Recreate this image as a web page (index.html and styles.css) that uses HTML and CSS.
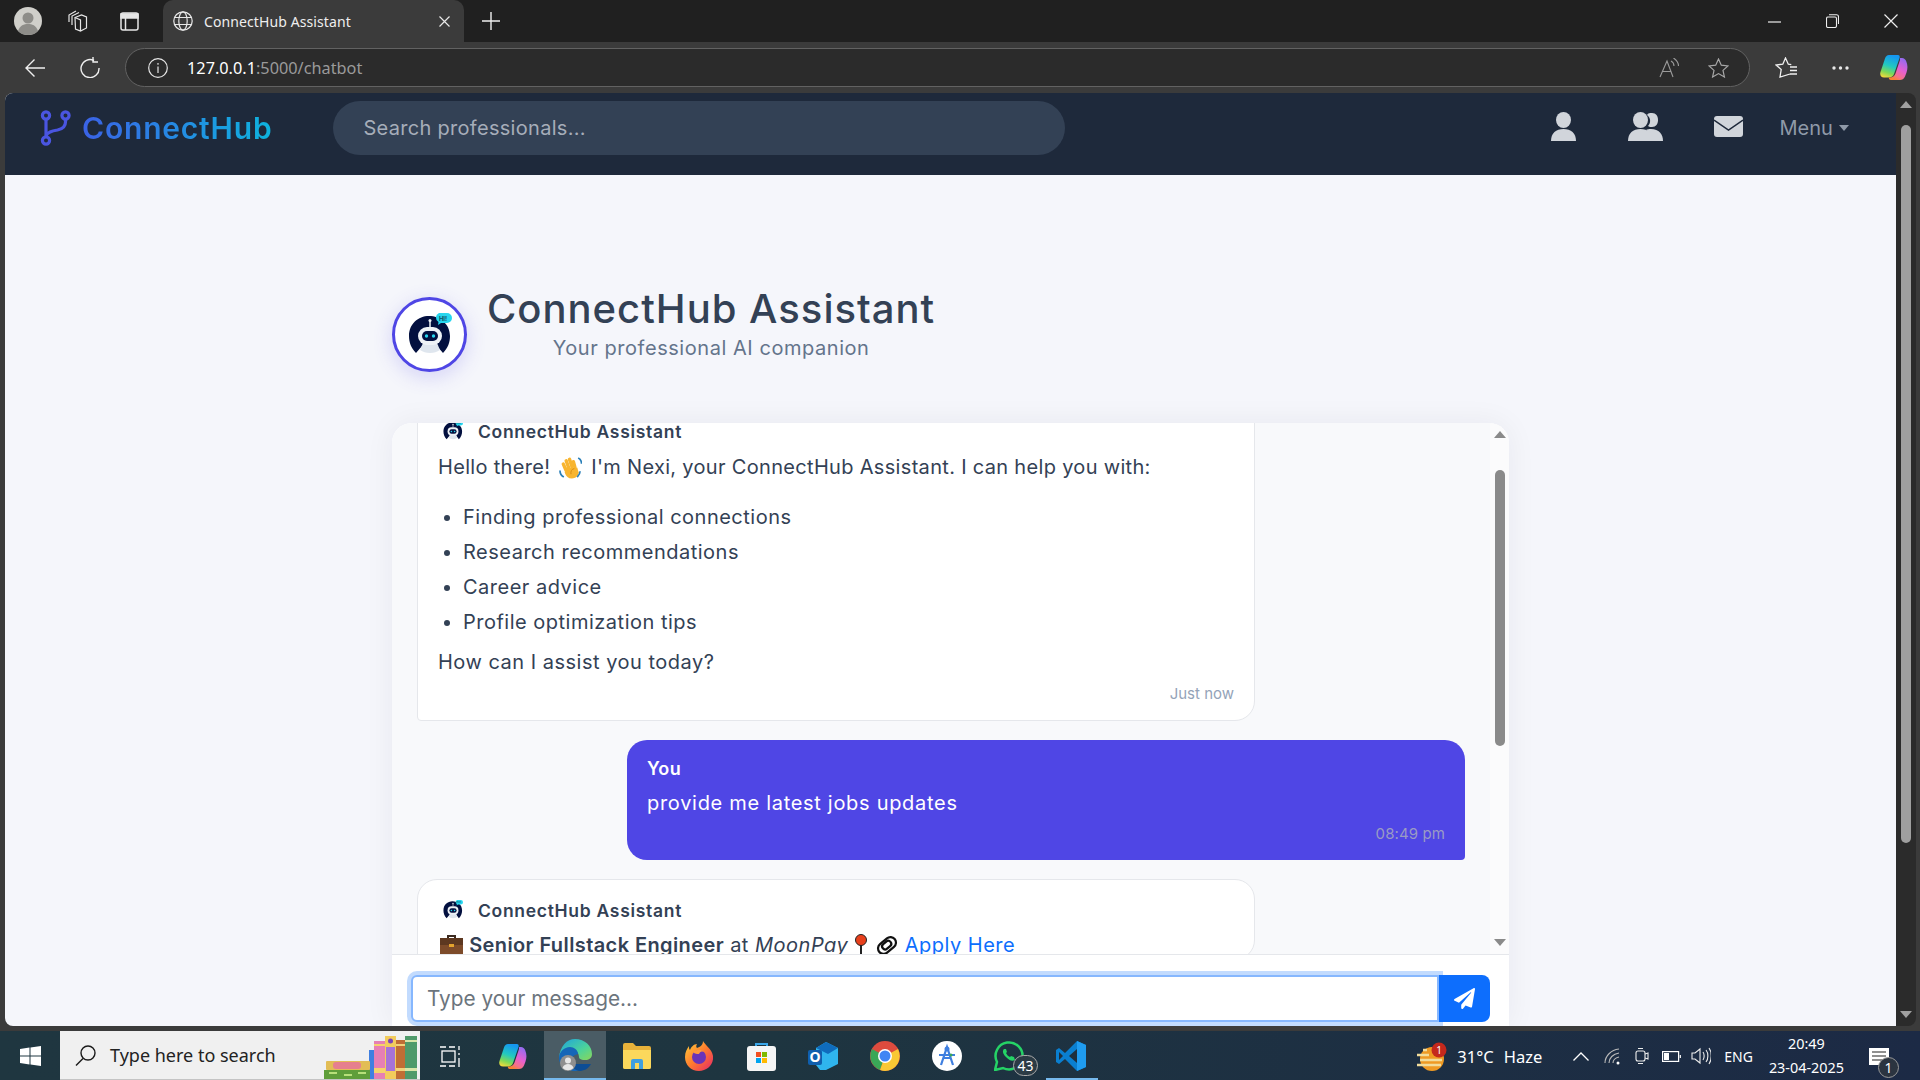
FILE: index.html
```html
<!DOCTYPE html>
<html lang="en">
<head>
    <meta charset="UTF-8">
    <meta name="viewport" content="width=device-width, initial-scale=1.0">
    <title>ConnectHub Assistant</title>
    <link rel="stylesheet" href="styles.css">
</head>
<body>
    <svg class="defs" width="0" height="0">
        <defs>
            <linearGradient id="cpa" x1="0.5" y1="0" x2="0.2" y2="1"><stop offset="0" stop-color="#1597f0"/><stop offset=".45" stop-color="#22c9c0"/><stop offset=".75" stop-color="#7ed957"/><stop offset="1" stop-color="#f6d93b"/></linearGradient>
            <linearGradient id="cpb" x1="0.8" y1="0" x2="0.3" y2="1"><stop offset="0" stop-color="#8d6cf2"/><stop offset=".5" stop-color="#e65fd0"/><stop offset=".8" stop-color="#f6708a"/><stop offset="1" stop-color="#f8822f"/></linearGradient>
            <symbol id="bot" viewBox="0 0 44 44">
                <path d="M8 40C3 35 1 29 1 23 1 11 10 3 21 3s21 8 21 20c0 6-2 12-7 17l-6-7H14z" fill="#03103f"/>
                <path d="M15 30h14l3 7c-3 2-6 3-10 3s-7-1-10-3z" fill="#dfe6ee"/>
                <rect x="10" y="14" width="24" height="18" rx="9" fill="#eef2f6"/>
                <rect x="14" y="18" width="16" height="10" rx="5" fill="#03103f"/>
                <circle cx="18.500" cy="23" r="1.700" fill="#27d6ee"/>
                <circle cx="25.500" cy="23" r="1.700" fill="#27d6ee"/>
                <path d="M22 8v6" stroke="#eef2f6" stroke-width="1.500"/>
                <circle cx="22" cy="7.500" r="1.500" fill="#eef2f6"/>
                <path d="M31 0h8a5 5 0 0 1 0 10h-6l-3 2 .5-3A5 5 0 0 1 31 0z" fill="#27d6ee"/>
                <text x="35" y="7.500" class="hi">HI!</text>
            </symbol>
            <symbol id="wave" viewBox="0 0 24 24">
                <g stroke="#f8b52f" stroke-width="3.600" stroke-linecap="round" fill="none">
                    <path d="M7 14 4.500 8.500"/>
                    <path d="M10 12 7.500 5"/>
                    <path d="M13.500 11 11 3.500"/>
                    <path d="M16.500 11.500 15 6"/>
                </g>
                <path d="M6 12h13l1.500 5c0 4-3.500 6.500-7 6.500-4 0-6-2-7.500-6z" fill="#f8b52f"/>
                <path d="M16 13c-3 1-4 3-3.500 6" stroke="#d68a12" stroke-width="1" fill="none"/>
                <path d="M1 15c0 3 1.500 5.500 4 7M20 2c2 1 3.500 3 3.500 6M22 16c0 2-1 4-3 6" stroke="#2a7fb8" stroke-width="1.800" fill="none"/>
            </symbol>
            <symbol id="copilot-mark" viewBox="0 0 28 27">
                <path d="M9 1h9c1.500 0 2 1.500 1.500 3L14 20c-.7 2-2.500 3.500-5 3.500H4C1 23.500-.5 21 .5 18L5 4.500C5.700 2.500 7 1 9 1z" fill="url(#cpa)"/>
                <path d="M20 4h2c2 0 3.500 1.500 4.300 3.500 1.500 4 1.500 7 .2 11l-1.500 4C24 25 22 26 20 26h-9c-1.500 0-2.500-1-2-2.500h1c2.500 0 4.500-1.500 5.500-4L20 6z" fill="url(#cpb)"/>
            </symbol>
        </defs>
    </svg>

    <div class="tab-strip">
        <span class="profile">
            <svg width="28" height="28" viewBox="0 0 28 28"><circle cx="14" cy="14" r="14" fill="#d0cfca"/><circle cx="14" cy="11" r="5.500" fill="#8e8d89"/><path d="M4 24c2-6 6-7 10-7s8 1 10 7c-3 3-6 4-10 4s-7-1-10-4z" fill="#8e8d89"/></svg>
        </span>
        <span class="strip-icon collections">
            <svg width="22" height="22" viewBox="0 0 22 22" fill="none" stroke="#e6e6e6" stroke-width="1.200"><path d="M9 7.500 15.500 5l5 2v11l-6 3-5-2z"/><path d="M9 7.500 14.500 10v11M6 15V6l7-3.500M3 12V5l7-4"/></svg>
        </span>
        <span class="strip-icon tabs-icon">
            <svg width="19" height="19" viewBox="0 0 19 19" fill="none" stroke="#e6e6e6" stroke-width="1.500"><rect x="1" y="1" width="17" height="17" rx="2"/><path d="M5.500 6v12" /><path d="M1 2h17v4H1z" fill="#e6e6e6"/></svg>
        </span>
        <div class="tab">
            <svg width="20" height="20" viewBox="0 0 20 20" fill="none" stroke="#e8e8e8" stroke-width="1.200"><circle cx="10" cy="10" r="9.200"/><ellipse cx="10" cy="10" rx="4.200" ry="9.200"/><path d="M1.500 6.500h17M1.500 13.500h17"/></svg>
            <span class="tab-title">ConnectHub Assistant</span>
            <svg class="tab-close" width="11" height="11" viewBox="0 0 11 11" stroke="#e8e8e8" stroke-width="1.200"><path d="M.5.500l10 10M10.500.500l-10 10"/></svg>
        </div>
        <svg class="new-tab" width="18" height="18" viewBox="0 0 18 18" stroke="#f0f0f0" stroke-width="1.400"><path d="M9 0v18M0 9h18"/></svg>
        <div class="window-controls">
            <svg width="13" height="13" viewBox="0 0 13 13" stroke="#eee" stroke-width="1.200"><path d="M0 7h13"/></svg>
            <svg width="13" height="14" viewBox="0 0 13 14" fill="none" stroke="#eee" stroke-width="1.100"><rect x=".5" y="3" width="10" height="10.500" rx="1.500"/><path d="M3 .7h7.500a2 2 0 0 1 2 2V10"/></svg>
            <svg width="14" height="14" viewBox="0 0 14 14" stroke="#eee" stroke-width="1.200"><path d="M.5.500l13 13M13.500.500l-13 13"/></svg>
        </div>
    </div>

    <div class="toolbar">
        <svg class="back" width="20" height="18" viewBox="0 0 20 18" fill="none" stroke="#efefef" stroke-width="1.400"><path d="M20 9H1M9.500.500 1 9l8.500 8.500"/></svg>
        <svg class="reload" width="20" height="21" viewBox="0 0 20 21" fill="none" stroke="#efefef" stroke-width="1.400"><path d="M14 3.500A9 9 0 1 0 19 11"/><path d="M13 0v5h5"/></svg>
        <div class="address">
            <svg width="20" height="20" viewBox="0 0 20 20" fill="none" stroke="#e6e6e6" stroke-width="1.200"><circle cx="10" cy="10" r="9.300"/><path d="M10 8.500V15M10 5v1.800"/></svg>
            <span class="url"><b>127.0.0.1</b>:5000/chatbot</span>
            <svg class="read-aloud" width="21" height="20" viewBox="0 0 21 20" fill="none" stroke="#9a9a9a" stroke-width="1.100"><path d="M1 19 8 3l6 16M3.500 13.500h9"/><path d="M12 3c2 1 3 3 3 5M14.500 0c3 2 5 5 5 8"/></svg>
            <svg class="address-star" width="21" height="20" viewBox="0 0 21 20" fill="none" stroke="#a8a8a8" stroke-width="1.200"><path d="m10.500 1 2.800 6.200 6.700.700-5 4.500 1.400 6.600-5.900-3.400L4.600 19l1.400-6.600-5-4.500 6.700-.700z"/></svg>
        </div>
        <svg class="fav-star" width="22" height="21" viewBox="0 0 22 21" fill="none" stroke="#f0f0f0" stroke-width="1.300"><path d="M15 17 5 20l1.200-7.500L1 8l6.800-.8L10.500 1l2.800 6.200 3 .5M15 10h7M15 13.500h7M15 17h7"/></svg>
        <svg class="more" width="17" height="4" viewBox="0 0 17 4" fill="#e8e8e8"><circle cx="2" cy="2" r="1.700"/><circle cx="8.500" cy="2" r="1.700"/><circle cx="15" cy="2" r="1.700"/></svg>
        <svg class="copilot" width="28" height="27"><use href="#copilot-mark"/></svg>
    </div>

    <div class="window">
        <div class="page">
            <nav class="navbar">
                <svg class="logo-mark" width="31" height="36" viewBox="0 0 31 36" fill="none" stroke="#4a55e0" stroke-width="3.200"><circle cx="6" cy="5.500" r="3.600"/><circle cx="6" cy="30.500" r="3.600"/><circle cx="25.500" cy="5.500" r="3.600"/><path d="M6 9v18M25.500 9v3c0 5-3 7-8 8-6 1-10 2-11.500 6"/></svg>
                <span class="brand">ConnectHub</span>
                <div class="search">Search professionals...</div>
                <div class="nav-links">
                    <svg class="nav-person" width="25" height="29" viewBox="0 0 25 29" fill="#d1d5db"><ellipse cx="12.500" cy="8" rx="7.500" ry="8"/><path d="M0 29c0-8 5-12 12.500-12S25 21 25 29z"/></svg>
                    <svg class="nav-people" width="35" height="29" viewBox="0 0 35 29" fill="#d1d5db"><path d="M19 3c1-2 3-2 5-2 4 0 6 3 6 7s-2 7-6 7c-1 0-3 0-4-1 3-3 3-8-1-11z"/><path d="M23 29c0-5-2-9-5-11 1-1 3-1 5-1 8 0 12 5 12 12z"/><ellipse cx="12.500" cy="8" rx="7.500" ry="8"/><path d="M0 29c0-8 5-12 12.500-12S25 21 25 29z"/></svg>
                    <svg class="nav-mail" width="29" height="21" viewBox="0 0 29 21"><rect width="29" height="21" rx="3" fill="#d1d5db"/><path d="M0 4 14.500 14 29 4" fill="none" stroke="#1e293b" stroke-width="1.500"/></svg>
                    <span class="nav-menu">Menu</span>
                    <span class="caret"></span>
                </div>
            </nav>

            <main class="main">
                <header class="chat-header">
                    <div class="header-avatar"><svg width="44" height="44"><use href="#bot"/></svg></div>
                    <div class="header-text">
                        <h1>ConnectHub Assistant</h1>
                        <p>Your professional AI companion</p>
                    </div>
                </header>

                <section class="chat-box">
                    <div class="messages-row">
                        <div class="messages">
                            <div class="msg bot first">
                                <div class="sender"><svg width="20" height="20"><use href="#bot"/></svg><span>ConnectHub Assistant</span></div>
                                <p class="hello">Hello there! <svg class="emoji" width="23" height="23"><use href="#wave"/></svg> I'm Nexi, your ConnectHub Assistant. I can help you with:</p>
                                <ul>
                                    <li>Finding professional connections</li>
                                    <li>Research recommendations</li>
                                    <li>Career advice</li>
                                    <li>Profile optimization tips</li>
                                </ul>
                                <p class="ask">How can I assist you today?</p>
                                <div class="time">Just now</div>
                            </div>
                            <div class="msg user">
                                <div class="you">You</div>
                                <p>provide me latest jobs updates</p>
                                <div class="time">08:49 pm</div>
                            </div>
                            <div class="msg bot">
                                <div class="sender"><svg width="20" height="20"><use href="#bot"/></svg><span>ConnectHub Assistant</span></div>
                                <p class="job">
                                    <svg class="emoji" width="23" height="23" viewBox="0 0 23 23"><path d="M8 5V2h7v3" fill="none" stroke="#3b2a20" stroke-width="2"/><rect y="4" width="23" height="18" rx="2" fill="#7d4b2a"/><rect y="4" width="23" height="7" fill="#5d3820"/><rect x="9" y="10" width="5" height="3" fill="#e3a32e"/></svg>
                                    <strong>Senior Fullstack Engineer</strong> at <em>MoonPay</em>
                                    <svg class="emoji pin" width="14" height="23" viewBox="0 0 14 23"><circle cx="7" cy="6" r="5.500" fill="#e8401c" stroke="#222"/><path d="M7 11v12" stroke="#222" stroke-width="2"/></svg>
                                    <svg class="emoji" width="24" height="23" viewBox="0 0 24 23" fill="none" stroke="#111" stroke-width="2.200"><rect x="2" y="6" width="20" height="11" rx="5.500" transform="rotate(-40 12 11.500)"/><rect x="7" y="8" width="10" height="6" rx="3" transform="rotate(-40 12 11.500)"/></svg>
                                    <a href="#">Apply Here</a>
                                </p>
                            </div>
                        </div>
                        <div class="inner-scrollbar">
                            <span class="arrow-up dim"></span>
                            <span class="inner-thumb"></span>
                            <span class="arrow-down dim"></span>
                        </div>
                    </div>
                    <form class="composer">
                        <div class="composer-input">Type your message...</div>
                        <button type="button" class="send">
                            <svg width="21" height="21" viewBox="0 0 512 512" fill="#fff"><path d="M476 3.200 12.500 270.600c-18.100 10.400-15.800 35.600 2.200 43.200L121 358.400l287.300-253.200c5.500-4.900 13.300 2.600 8.600 8.300L176 407v80.500c0 23.600 28.500 32.900 42.500 15.800L282 426l124.600 52.200c14.200 6 30.400-2.900 33-18.200l72-432C515 7.800 493.300-6.800 476 3.200z"/></svg>
                        </button>
                    </form>
                </section>
            </main>
        </div>
        <div class="page-scrollbar">
            <span class="arrow-up"></span>
            <span class="page-thumb"></span>
            <span class="arrow-down"></span>
        </div>
    </div>

    <footer class="taskbar">
        <span class="start">
            <svg width="21" height="20" viewBox="0 0 21 20" fill="#fff"><path d="M0 3 9.500 1.600V9.500H0zM10.500 1.400 21 0v9.500H10.500zM0 10.500h9.500v7.900L0 17zM10.500 10.500H21V20l-10.500-1.500z"/></svg>
        </span>
        <div class="task-search">
            <svg width="21" height="21" viewBox="0 0 21 21" fill="none" stroke="#1a1a1a" stroke-width="1.400"><circle cx="13" cy="8" r="7"/><path d="M8 13.500 1 20.500"/></svg>
            <span>Type here to search</span>
            <svg class="books" width="96" height="44" viewBox="0 0 96 44">
                <rect x="45" y="15" width="5" height="29" fill="#3f7fe0"/>
                <rect x="50" y="6" width="11" height="38" fill="#e67fb4"/><rect x="50" y="9" width="11" height="2" fill="#f5d26b"/><rect x="50" y="33" width="11" height="5" fill="#f5d26b"/>
                <rect x="61" y="1" width="11" height="43" fill="#f2cc5c"/><rect x="62" y="12" width="9" height="24" fill="#a673d8"/><circle cx="66.500" cy="6" r="2.500" fill="#7a45b8"/>
                <rect x="72" y="5" width="9" height="39" fill="#c06e35"/><rect x="72" y="9" width="9" height="2" fill="#f2d27a"/><rect x="72" y="33" width="9" height="3" fill="#f2d27a"/>
                <rect x="81" y="1" width="12" height="43" fill="#4f9a6a"/><rect x="81" y="5" width="12" height="2" fill="#d8e6a8"/><rect x="81" y="33" width="12" height="3" fill="#d8e6a8"/>
                <rect x="2" y="26" width="44" height="9" rx="1" fill="#e2bd55"/><rect x="9" y="27" width="28" height="7" rx="3" fill="#e67f8e"/>
                <rect y="35" width="46" height="9" fill="#5f9e3a"/><path d="M5 38h8M20 40h8M34 38h8" stroke="#b8e07a" stroke-width="2"/>
            </svg>
        </div>
        <span class="slot task-view">
            <svg width="21" height="21" viewBox="0 0 21 21" fill="none" stroke="#fff" stroke-width="1.300"><rect x="2" y="5" width="13" height="11"/><path d="M0 1h6M9 1h6M0 20h6M9 20h6M19 0v4M19 7v2M19 12v9"/></svg>
        </span>
        <span class="slot">
            <svg width="28" height="27"><use href="#copilot-mark"/></svg>
        </span>
        <span class="slot active">
            <svg width="33" height="32" viewBox="0 0 33 32">
                <defs><linearGradient id="edge" x1="0" y1="0" x2="1" y2="1"><stop offset="0" stop-color="#1ca2e0"/><stop offset=".6" stop-color="#4cd39a"/><stop offset="1" stop-color="#8ad65a"/></linearGradient></defs>
                <path d="M16 0c10 0 17 7 17 15 0 4-3 6-7 6-5 0-6-2-6-3 0-5-5-9-10-7-4 1-8 4-10 8C1 7 8 0 16 0z" fill="url(#edge)"/>
                <path d="M0 19c0-6 5-11 11-11 4 0 8 3 8 7-5 1-8 5-7 10 1 3 4 6 8 7C9 33 0 28 0 19z" fill="#1566b8"/>
                <path d="M20 32c-4-1-7-4-8-7h20c-3 5-7 7-12 7z" fill="#0c4d95"/>
                <circle cx="9" cy="24" r="8" fill="#8f8f8f"/><circle cx="9" cy="21.500" r="3" fill="#e6e6e6"/><path d="M3.500 29c1-3 3-4 5.500-4s4.500 1 5.500 4a8 8 0 0 1-11 0z" fill="#e6e6e6"/>
            </svg>
        </span>
        <span class="slot">
            <svg width="28" height="26" viewBox="0 0 28 26"><path d="M0 2a2 2 0 0 1 2-2h8l3 3h13a2 2 0 0 1 2 2v19a2 2 0 0 1-2 2H2a2 2 0 0 1-2-2z" fill="#e8b23a"/><path d="M0 7h28v17a2 2 0 0 1-2 2H2a2 2 0 0 1-2-2z" fill="#fbd85c"/><path d="M8 26v-8a2 2 0 0 1 2-2h8a2 2 0 0 1 2 2v8h-4v-6h-4v6z" fill="#3f9fe0"/></svg>
        </span>
        <span class="slot">
            <svg width="28" height="30" viewBox="0 0 28 30">
                <defs><linearGradient id="ff" x1="0" y1="0" x2="1" y2="1"><stop offset="0" stop-color="#ffd23a"/><stop offset=".5" stop-color="#ff7a2e"/><stop offset="1" stop-color="#e5246a"/></linearGradient></defs>
                <path d="M18 0c2 4 9 8 10 15 1 9-6 15-14 15S0 24 0 16c0-5 2-8 4-11 0 2 0 3 1 4 1-3 4-6 7-6-1 2-1 3 0 4 3-1 6-3 6-7z" fill="url(#ff)"/>
                <circle cx="14" cy="16" r="7" fill="#6a33b8"/><path d="M8 11c3-3 9-3 11 0-3-1-4 0-5 2-2 0-4 0-6-2z" fill="#ff9a3c"/>
            </svg>
        </span>
        <span class="slot">
            <svg width="29" height="30" viewBox="0 0 29 30"><path d="M9 6V3h11v3" fill="none" stroke="#3aa6e8" stroke-width="2"/><rect y="5" width="29" height="25" rx="3" fill="#f5f5f5"/><rect x="9" y="11" width="5" height="5" fill="#f25022"/><rect x="15" y="11" width="5" height="5" fill="#7fba00"/><rect x="9" y="17" width="5" height="5" fill="#00a4ef"/><rect x="15" y="17" width="5" height="5" fill="#ffb900"/></svg>
        </span>
        <span class="slot">
            <svg width="30" height="28" viewBox="0 0 30 28"><path d="M8 6 18 0l12 6v16l-12 6H12l-4-5z" fill="#2fb5ee"/><path d="M8 6 18 0l12 6-10 6z" fill="#0f6cbd"/><rect y="8" width="14" height="15" rx="2" fill="#0f5fae"/><text x="7" y="20" class="outlook-o">O</text></svg>
        </span>
        <span class="slot">
            <svg width="30" height="30" viewBox="0 0 30 30"><circle cx="15" cy="15" r="15" fill="#dd4b3e"/><path d="M15 15 28 8a15 15 0 0 1-13 22z" fill="#f9c834"/><path d="M15 15 2 8a15 15 0 0 0 8 21l5-14z" fill="#3aa757"/><path d="M15 15 10 29a15 15 0 0 0 5 1l7-12z" fill="#f9c834"/><circle cx="15" cy="15" r="7" fill="#fff"/><circle cx="15" cy="15" r="5.500" fill="#4285f4"/></svg>
        </span>
        <span class="slot">
            <svg width="30" height="30" viewBox="0 0 30 30"><circle cx="15" cy="15" r="15" fill="#fff"/><path d="M9 24 15 6l6 18M11 17h8M7 14h16" fill="none" stroke="#3f7fe0" stroke-width="2.200"/><circle cx="15" cy="8" r="2.500" fill="#3f7fe0"/><circle cx="19" cy="14" r="1.500" fill="#3aa757"/></svg>
        </span>
        <span class="slot">
            <svg width="30" height="30" viewBox="0 0 30 30" fill="none"><path d="M1 29l2-8A13.500 13.500 0 1 1 9 27z" stroke="#25d366" stroke-width="2.500"/><path d="M10 8c-2 2-1 5 2 8s6 5 9 3l-1-3-3-1-1 1c-2-1-3-2-4-4l1-1-1-3z" fill="#25d366"/></svg>
            <span class="badge-count">43</span>
        </span>
        <span class="slot vscode">
            <svg width="30" height="30" viewBox="0 0 30 30"><path d="M21 0 30 4v22l-9 4L9 18 3 23 0 21v-12l3-2 6 5z" fill="#0a7fd0"/><path d="M21 0 30 4v22l-9 4z" fill="#1f9cf0"/><path d="M21 8 13 15l8 7z" fill="#1e2f3d"/><path d="M3 11v8l4-4z" fill="#1e2f3d"/></svg>
        </span>
        <div class="tray">
            <span class="weather">
                <svg width="30" height="29" viewBox="0 0 30 29"><circle cx="15" cy="17" r="12" fill="#ef9a23"/><path d="M0 13h12M3 18h22M0 23h24M6 8h4" stroke="#f2dc9a" stroke-width="2.500"/><circle cx="22" cy="8" r="7.500" fill="#c4281c"/><text x="22" y="11.500" class="weather-one">1</text></svg>
                <span class="temp">31°C</span>
                <span>Haze</span>
            </span>
            <svg class="tray-chev" width="16" height="9" viewBox="0 0 16 9" fill="none" stroke="#fff" stroke-width="1.300"><path d="M.500 8.500 8 1l7.500 7.500"/></svg>
            <svg class="tray-wifi" width="16" height="17" viewBox="0 0 16 17" fill="none" stroke="#bbb" stroke-width="1.100"><path d="M1 15C1 8 7 2 15 1M5 15c0-5 4-9 10-10M9 15c0-3 2-5 6-6"/><circle cx="14" cy="15" r="1.500" fill="#fff" stroke="none"/></svg>
            <svg class="tray-cam" width="14" height="18" viewBox="0 0 14 18" fill="none" stroke="#eee" stroke-width="1.100"><rect x="1" y="4" width="9" height="10" rx="2"/><path d="M10 7l3-1v6l-3-1M3 1.500h5M3 16.500h5"/></svg>
            <svg class="tray-batt" width="19" height="11" viewBox="0 0 19 11" fill="none" stroke="#fff" stroke-width="1.200"><rect x=".6" y=".6" width="16" height="9.800"/><rect x="2" y="2" width="5" height="7" fill="#fff" stroke="none"/><path d="M18.300 4v3"/></svg>
            <svg class="tray-vol" width="20" height="18" viewBox="0 0 20 18" fill="none" stroke="#eee" stroke-width="1.100"><path d="M1 6h3l5-4v14l-5-4H1z"/><path d="M12 5c1.500 2 1.500 6 0 8M15 3c2.500 3 2.500 9 0 12M18 1c3 4 3 12 0 16"/></svg>
            <span class="lang">ENG</span>
            <span class="clock"><span>20:49</span><span>23-04-2025</span></span>
            <span class="notify">
                <svg width="20" height="17" viewBox="0 0 20 17"><rect width="20" height="17" fill="#fff"/><path d="M3 4h14M3 8h14M3 12h14" stroke="#222" stroke-width="1.200"/></svg>
                <span class="notify-count">1</span>
            </span>
        </div>
    </footer>
</body>
</html>
```

FILE: styles.css
```css
* {
    box-sizing: border-box;
}
html, body {
    height: 100%;
}
body {
    margin: 0;
    width: 1920px;
    height: 1080px;
    overflow: hidden;
    display: flex;
    flex-direction: column;
    background-color: #3b3b3b;
    font-family: Inter, "Noto Sans", sans-serif;
    color: #334155;
}
.defs {
    position: absolute;
}
.hi {
    font-size: 6px;
    font-weight: 700;
    fill: #0d4f66;
    text-anchor: middle;
}

/* browser chrome */
.tab-strip {
    height: 42px;
    flex: none;
    display: flex;
    align-items: center;
    background-color: #202020;
    color: #eee;
}
.profile {
    display: flex;
    margin-left: 14px;
}
.strip-icon {
    display: flex;
}
.collections {
    margin-left: 24px;
}
.tabs-icon {
    margin-left: 32px;
}
.tab {
    width: 301px;
    height: 42px;
    margin-left: 24px;
    padding: 0 14px 0 10px;
    display: flex;
    align-items: center;
    background-color: #3b3b3b;
    border-radius: 10px 10px 0 0;
}
.tab-title {
    margin-left: 11px;
    font-family: "Noto Sans", sans-serif;
    font-size: 14px;
    letter-spacing: 0.1px;
    flex: 1;
}
.new-tab {
    margin-left: 18px;
}
.window-controls {
    margin-left: auto;
    margin-right: 22px;
    display: flex;
    align-items: center;
    gap: 45px;
}
.toolbar {
    height: 51px;
    flex: none;
    display: flex;
    align-items: center;
    background-color: #3b3b3b;
}
.back {
    margin-left: 25px;
}
.reload {
    margin-left: 35px;
}
.address {
    width: 1625px;
    height: 39px;
    margin-left: 25px;
    padding: 0 20px 0 22px;
    display: flex;
    align-items: center;
    background-color: #2b2b2b;
    border: 1.500px solid #626262;
    border-radius: 20px;
}
.url {
    margin-left: 19px;
    font-family: "Noto Sans", sans-serif;
    font-size: 16.300px;
    color: #9a9a9a;
    flex: 1;
}
.url b {
    font-weight: 400;
    color: #fff;
}
.address-star {
    margin-left: 28px;
}
.fav-star {
    margin-left: 25px;
}
.more {
    margin-left: 35px;
}
.copilot {
    margin-left: 31px;
}
.window {
    height: 933px;
    flex: none;
    display: flex;
    padding-left: 5px;
}
.page {
    width: 1891px;
    display: flex;
    flex-direction: column;
    background-color: #f5f6fb;
    border-radius: 8px 0 0 8px;
    overflow: hidden;
}
.page-scrollbar {
    width: 20px;
    padding: 8px 0;
    display: flex;
    flex-direction: column;
    align-items: center;
    background-color: #2b2b2b;
    border-radius: 0 8px 8px 0;
}
.arrow-up, .arrow-down {
    width: 0;
    height: 0;
    border-left: 6px solid transparent;
    border-right: 6px solid transparent;
}
.arrow-up {
    border-bottom: 7px solid #a0a0a0;
}
.arrow-down {
    margin-top: auto;
    border-top: 7px solid #a0a0a0;
}
.page-thumb {
    width: 10px;
    height: 718px;
    margin-top: 17px;
    background-color: #9f9f9f;
    border-radius: 5px;
}

/* site navbar */
.navbar {
    height: 82px;
    flex: none;
    display: flex;
    align-items: flex-start;
    padding-left: 35px;
    background-color: #1e293b;
}
.logo-mark {
    margin-top: 17px;
}
.brand {
    margin-left: 11px;
    line-height: 70px;
    font-size: 30px;
    font-weight: 600;
    letter-spacing: 0.8px;
    background: linear-gradient(90deg, #3b62e6, #0eb3de);
    -webkit-background-clip: text;
    background-clip: text;
    color: transparent;
}
.search {
    width: 732px;
    height: 54px;
    margin-left: 61px;
    margin-top: 8px;
    padding-left: 30px;
    line-height: 54px;
    font-size: 20px;
    letter-spacing: 0.3px;
    color: #a6adb9;
    background-color: #334155;
    border-radius: 27px;
}
.nav-links {
    margin-left: 486px;
    display: flex;
    align-items: flex-start;
}
.nav-person {
    margin-top: 19px;
}
.nav-people {
    margin-top: 19px;
    margin-left: 52px;
}
.nav-mail {
    margin-top: 23px;
    margin-left: 51px;
}
.nav-menu {
    margin-left: 36px;
    line-height: 70px;
    font-size: 20px;
    color: #8f99a8;
}
.caret {
    margin-left: 6px;
    margin-top: 32px;
    border-left: 5px solid transparent;
    border-right: 5px solid transparent;
    border-top: 6px solid #8f99a8;
}

/* chat page */
.main {
    flex: 1;
    min-height: 0;
    width: 1117px;
    margin: 0 auto;
    padding-top: 122px;
    display: flex;
    flex-direction: column;
}
.chat-header {
    display: flex;
    align-items: flex-start;
    height: 126px;
    flex: none;
}
.header-avatar {
    width: 75px;
    height: 75px;
    display: flex;
    align-items: center;
    justify-content: center;
    background-color: #fff;
    border: 3px solid #4f46e5;
    border-radius: 50%;
    box-shadow: 0 5px 20px rgba(79, 70, 229, 0.2);
}
.header-text {
    margin-left: 20px;
    margin-top: -16px;
    text-align: center;
}
.header-text h1 {
    margin: 0;
    font-size: 40px;
    line-height: 56px;
    font-weight: 500;
    letter-spacing: 1px;
    color: #334155;
}
.header-text p {
    margin: 0;
    font-size: 20px;
    line-height: 23px;
    letter-spacing: 0.55px;
    color: #64748b;
}
.chat-box {
    height: 603px;
    flex: none;
    display: flex;
    flex-direction: column;
    background-color: #fff;
    border-radius: 20px 20px 0 0;
    box-shadow: 0 0 30px rgba(30, 41, 59, 0.06);
    overflow: hidden;
}
.messages-row {
    height: 531px;
    flex: none;
    display: flex;
    background-color: #f8f9fb;
}
.messages {
    flex: 1;
    padding: 0 25px;
    overflow: hidden;
    display: flex;
    flex-direction: column;
    gap: 19px;
}
.inner-scrollbar {
    width: 19px;
    padding: 8px 0;
    display: flex;
    flex-direction: column;
    align-items: center;
    background-color: #fbfbfc;
}
.arrow-up.dim {
    border-bottom-color: #8a8a8a;
}
.arrow-down.dim {
    border-top-color: #8a8a8a;
}
.inner-thumb {
    width: 10px;
    height: 276px;
    margin-top: 32px;
    background-color: #8a8a8a;
    border-radius: 5px;
}
.msg {
    flex: none;
    width: 838px;
    font-size: 20px;
    letter-spacing: 0.5px;
}
.msg p {
    margin: 0;
}
.bot {
    padding: 17px 20px 0;
    background-color: #fff;
    border: 1px solid #e5e7eb;
    border-radius: 20px 20px 20px 4px;
    color: #334155;
}
.first {
    height: 321px;
    margin-top: -23px;
}
.sender {
    height: 26px;
    display: flex;
    align-items: center;
    gap: 15px;
    margin-left: 5px;
    font-size: 17.500px;
    font-weight: 600;
    letter-spacing: 0.7px;
}
.hello {
    margin-top: 9px !important;
    line-height: 28px;
    letter-spacing: 0.32px;
}
.hello .emoji {
    margin: 0 3px;
}
.emoji {
    vertical-align: -5px;
}
.msg ul {
    margin: 19px 0 0;
    padding-left: 25px;
    list-style: disc;
}
.msg li {
    line-height: 35px;
}
.ask {
    margin-top: 8px !important;
    line-height: 28px;
}
.time {
    margin-top: 8px;
    text-align: right;
    font-size: 15px;
    line-height: 20px;
    letter-spacing: 0;
    color: #94a3b8;
}
.user {
    height: 120px;
    align-self: flex-end;
    padding: 17px 20px 0;
    background-color: #4f46e5;
    color: #fff;
    border-radius: 20px 20px 4px 20px;
}
.you {
    line-height: 24px;
    font-size: 18px;
    font-weight: 600;
    letter-spacing: 0.3px;
}
.user p {
    margin-top: 8px;
    line-height: 28px;
    letter-spacing: 0.7px;
}
.user .time {
    margin-top: 7px;
    letter-spacing: 0.1px;
    color: #9a9bc4;
}
.job {
    margin-top: 8px !important;
    margin-left: 2px !important;
    line-height: 28px;
    white-space: nowrap;
}
.job strong {
    font-weight: 600;
    letter-spacing: 0.4px;
}
.job a {
    color: #0d6efd;
    text-decoration: none;
}
.composer {
    height: 72px;
    flex: none;
    display: flex;
    margin: 0;
    padding: 20px 19px 0;
    background-color: #fff;
    border-top: 1px solid #e5e7eb;
}
.composer-input {
    flex: 1;
    height: 47px;
    padding-left: 14px;
    line-height: 43px;
    font-size: 20.800px;
    color: #6c757d;
    background-color: #fff;
    border: 2px solid #86b7fe;
    border-radius: 6px 0 0 6px;
    box-shadow: 0 0 0 4px rgba(13, 110, 253, 0.25);
}
.send {
    position: relative;
    width: 51px;
    height: 47px;
    display: flex;
    align-items: center;
    justify-content: center;
    padding: 0;
    background-color: #0d6efd;
    border: none;
    border-radius: 0 8px 8px 0;
}

/* windows taskbar */
.taskbar {
    height: 50px;
    flex: none;
    margin-top: 5px;
    display: flex;
    align-items: center;
    background: linear-gradient(90deg, #1f3640, #1e3540 40%, #1c2a45);
    color: #fff;
    font-family: "Noto Sans", sans-serif;
}
.start {
    width: 60px;
    height: 50px;
    display: flex;
    align-items: center;
    justify-content: center;
}
.task-search {
    width: 360px;
    height: 50px;
    padding-left: 15px;
    display: flex;
    align-items: center;
    overflow: hidden;
    position: relative;
    background-color: #f0f0f0;
    border-bottom: 2px solid #c4c4c4;
    color: #222;
    font-size: 18px;
}
.task-search span {
    margin-left: 14px;
}
.books {
    position: absolute;
    right: 0;
    bottom: 0;
}
.slot {
    width: 62px;
    height: 50px;
    display: flex;
    align-items: center;
    justify-content: center;
    position: relative;
    flex: none;
}
.task-view svg {
    margin-left: -2px;
}
.active {
    background-color: #4a5c65;
    border-bottom: 3px solid #76b9ed;
}
.vscode::after {
    content: "";
    position: absolute;
    left: 6px;
    right: 4px;
    bottom: 0;
    height: 3px;
    background-color: #76b9ed;
}
.badge-count {
    position: absolute;
    left: 35px;
    top: 24px;
    width: 25px;
    height: 21px;
    line-height: 19px;
    text-align: center;
    font-size: 14px;
    background-color: #2b3b45;
    border: 1px solid #aaa;
    border-radius: 11px;
}
.outlook-o {
    font-size: 14px;
    font-weight: 700;
    fill: #fff;
    text-anchor: middle;
}
.weather-one {
    font-size: 10px;
    fill: #fff;
    text-anchor: middle;
}
.tray {
    margin-left: auto;
    padding-right: 31px;
    display: flex;
    align-items: center;
}
.weather {
    display: flex;
    align-items: center;
    font-size: 16.500px;
}
.temp {
    margin: 0 10px;
}
.tray-chev {
    margin-left: 31px;
}
.tray-wifi {
    margin-left: 15px;
}
.tray-cam {
    margin-left: 15px;
}
.tray-batt {
    margin-left: 13px;
}
.tray-vol {
    margin-left: 10px;
}
.lang {
    margin-left: 13px;
    font-size: 14px;
}
.clock {
    margin-left: 16px;
    display: flex;
    flex-direction: column;
    align-items: center;
    font-size: 14.400px;
    line-height: 24px;
}
.notify {
    position: relative;
    margin-left: 25px;
    display: flex;
}
.notify-count {
    position: absolute;
    left: 9px;
    top: 9px;
    width: 21px;
    height: 21px;
    line-height: 19px;
    text-align: center;
    font-size: 14px;
    background-color: #2b3440;
    border: 1px solid #999;
    border-radius: 50%;
}
```
